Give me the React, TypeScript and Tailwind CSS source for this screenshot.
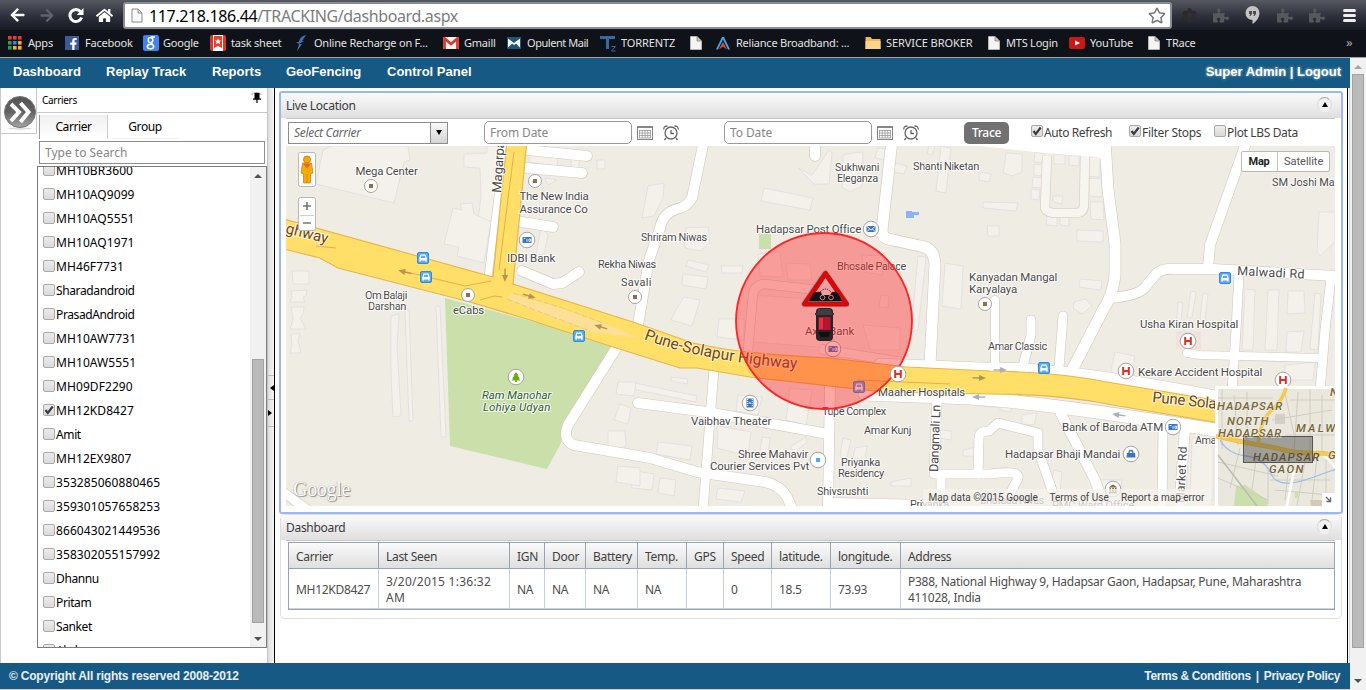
import React from "react";
import { FaArrowLeft, FaArrowRight, FaHome, FaPuzzlePiece, FaCog, FaRegStar, FaFacebookF } from "react-icons/fa";

const ui = "font-['Noto_Sans',sans-serif]";
const arial = "font-['Liberation_Sans',sans-serif]";

/* ---------- browser chrome ---------- */

function Page({ className = "h-[14px] w-[12px]" }: { className?: string }) {
  return (
    <svg viewBox="0 0 12 14" className={className}>
      <path d="M.5.5H7L11.5 5v8.500H.5Z" fill="#f4f4f4" stroke="#d8d8d8" strokeWidth=".6" />
      <path d="M7 .5V5h4.500" fill="#c9c9c9" stroke="#777" strokeWidth=".7" />
    </svg>
  );
}

function AppsIcon() {
  const c = ["#e33b2e", "#e33b2e", "#e33b2e", "#2f9e55", "#3f7fe8", "#f0b41c", "#2f9e55", "#f0b41c", "#f0b41c"];
  return (
    <svg viewBox="0 0 14 14" className="h-[14px] w-[14px]">
      {c.map((f, i) => <rect key={i} x={(i % 3) * 5} y={Math.floor(i / 3) * 5} width="3.600" height="3.600" fill={f} />)}
    </svg>
  );
}

function Mark({ w, iconW, icon, children }: { w: string; iconW: string; icon: React.ReactNode; children?: React.ReactNode }) {
  return (
    <div className={`flex shrink-0 items-center ${w}`}>
      <div className={`flex shrink-0 items-center ${iconW}`}>{icon}</div>
      <span className="whitespace-nowrap">{children}</span>
    </div>
  );
}

function Chrome() {
  return (
    <header className="h-[58px] border-b border-[#a9a3a8] bg-[#10121a]">
      <div className="flex h-[30px] items-center bg-gradient-to-b from-[#565962] via-[#30333d] to-[#181a24] text-white">
        <div className="flex w-[123px] items-center pl-[9px]">
          <FaArrowLeft className="h-[16px] w-[17px]" />
          <FaArrowRight className="ml-[13px] h-[15px] w-[16px] text-[#5f626a]" />
          <svg viewBox="0 0 16 16" className="ml-[13px] h-[17px] w-[16px]">
            <path d="M12.600 4.200A6 6 0 1 0 13.600 10" fill="none" stroke="#fff" strokeWidth="3" />
            <path d="M15.500.5v7H8.700Z" fill="#fff" />
          </svg>
          <FaHome className="ml-[12px] h-[17px] w-[17px]" />
        </div>
        <div className="mt-px flex h-[27px] w-[1049px] items-center rounded-[3px] border-2 border-[#8b8d94] bg-white pl-[6px] pr-[4px]">
          <svg viewBox="0 0 12 15" className="h-[15px] w-[12px]">
            <path d="M1 1h6l4 4v9H1Z" fill="#fafafa" stroke="#888" />
            <path d="M7 1v4h4" fill="none" stroke="#888" />
          </svg>
          <span className={`${ui} ml-[6px] text-[16px] leading-none tracking-[-0.38px] text-[#7c7c7c]`}><span className="text-black">117.218.186.44</span>/TRACKING/dashboard.aspx</span>
          <FaRegStar className="ml-auto h-[17px] w-[18px] text-[#777]" />
        </div>
        <div className="flex flex-1 items-center pl-[10px]">
          <FaCog className="h-[15px] w-[15px] text-[#2b2a2c]" />
          <FaPuzzlePiece className="ml-[16px] h-[15px] w-[16px] text-[#57585c]" />
          <svg viewBox="0 0 14 18" className="ml-[16px] h-[18px] w-[15px]">
            <path d="M7 0a7 7 0 0 1 7 7c0 5-4 9-7 11v-4A7 7 0 0 1 7 0Z" fill="#c4c4c6" />
            <path d="M3.500 5h3v3L5 10H4l.7-2H3.500Zm4 0h3v3L9 10H8l.7-2H7.500Z" fill="#4a4c54" />
          </svg>
          <FaPuzzlePiece className="ml-[17px] h-[15px] w-[16px] text-[#57585c]" />
          <FaPuzzlePiece className="ml-[16px] h-[15px] w-[16px] text-[#57585c]" />
          <div className="ml-[18px] flex flex-col gap-[2px]">
            <i className="h-[3px] w-[13px] rounded-sm bg-[#eee]" />
            <i className="h-[3px] w-[13px] rounded-sm bg-[#eee]" />
            <i className="h-[3px] w-[13px] rounded-sm bg-[#eee]" />
          </div>
        </div>
      </div>
      <div className={`${ui} flex h-[26px] items-center pl-[8px] text-[11px] tracking-[-0.22px] text-[#e2e2e2]`}>
        <Mark w="w-[57px]" iconW="w-[20px]" icon={<AppsIcon />}>Apps</Mark>
        <Mark w="w-[78px]" iconW="w-[20px]" icon={<span className="flex h-[14px] w-[14px] items-end justify-end bg-[#3f5a9b] pr-px"><FaFacebookF className="h-[12px] w-[9px] text-white" /></span>}>Facebook</Mark>
        <Mark w="w-[67px]" iconW="w-[20px]" icon={<svg viewBox="0 0 16 16" className="h-[16px] w-[16px]"><rect width="16" height="16" rx="2" fill="#4083f0" /><ellipse cx="7.500" cy="5" rx="2.300" ry="2.600" fill="none" stroke="#fff" strokeWidth="1.500" /><ellipse cx="7.500" cy="11.500" rx="3.200" ry="2.300" fill="none" stroke="#fff" strokeWidth="1.500" /><path d="M8 2h4M8 7.500l1.500 1.500" stroke="#fff" strokeWidth="1.300" /></svg>}>Google</Mark>
        <Mark w="w-[85px]" iconW="w-[21px]" icon={<svg viewBox="0 0 16 16" className="h-[16px] w-[16px]"><rect width="16" height="16" rx="2" fill="#d93a27" /><rect x="3" width="10" height="16" fill="#fff" /><path d="M4 1h8v12l-4-2-4 2Z" fill="#e1402b" /><path d="m8 3.500 1 2h2L9.500 7l.5 2.300-2-1.200-2 1.200L6.500 7 5 5.500h2Z" fill="#fff" /></svg>}>task sheet</Mark>
        <Mark w="w-[148px]" iconW="w-[19px]" icon={<svg viewBox="0 0 12 16" className="h-[16px] w-[12px]"><path d="M11 0C7 1 4 4 4 7H1l3 2-2 7 5-7H4l5-3H7Z" fill="#3b74bd" /></svg>}>Online Recharge on F...</Mark>
        <Mark w="w-[64px]" iconW="w-[21px]" icon={<svg viewBox="0 0 16 12" className="h-[12px] w-[16px]"><rect width="16" height="12" fill="#f2f2f2" /><path d="M1.500 12V1.500L8 7l6.500-5.500V12" fill="none" stroke="#d83a2e" strokeWidth="2.800" /></svg>}>Gmaill</Mark>
        <Mark w="w-[93px]" iconW="w-[20px]" icon={<svg viewBox="0 0 14 12" className="h-[12px] w-[14px]"><rect width="14" height="12" fill="#1f5877" /><path d="M1 1.500 7 6l6-4.500v9L9 6.500 7 8 5 6.500l-4 4Z" fill="#fff" /></svg>}><span className="tracking-[-0.45px]">Opulent Mail</span></Mark>
        <Mark w="w-[90px]" iconW="w-[21px]" icon={<svg viewBox="0 0 17 17" className="h-[17px] w-[17px]"><path d="M0 1h15v3H9v10H6V4H0Z" fill="#376a9f" /><path d="M11.500 11.500h4l-4 4.500h4" fill="none" stroke="#376a9f" /></svg>}><span className="tracking-[-0.1px]">TORRENTZ</span></Mark>
        <Mark w="w-[25px]" iconW="w-[12px]" icon={<Page />} />
        <Mark w="w-[150px]" iconW="w-[21px]" icon={<svg viewBox="0 0 16 14" className="h-[14px] w-[16px]"><path d="M1 13.500 7 1h2l6 12.500h-2L8 3.500l-5 10Z" fill="#41a4e4" /><path d="M4 13.500 8 6l4 7.500L8 10.500Z" fill="#ec4a36" /></svg>}>Reliance Broadband: ...</Mark>
        <Mark w="w-[123px]" iconW="w-[21px]" icon={<svg viewBox="0 0 16 14" className="h-[14px] w-[16px]"><path d="M.5 1h5L7 3h8.500v10H.5Z" fill="#eeb85f" /><path d="M.5 5h15v8H.5Z" fill="#f9d48a" /></svg>}><span className="tracking-[-0.08px]">SERVICE BROKER</span></Mark>
        <Mark w="w-[81px]" iconW="w-[18px]" icon={<Page />}>MTS Login</Mark>
        <Mark w="w-[79px]" iconW="w-[21px]" icon={<svg viewBox="0 0 16 12" className="h-[12px] w-[16px]"><rect width="16" height="12" rx="2" fill="#ca1717" /><path d="m6 3.500 5 2.500-5 2.500Z" fill="#fff" /></svg>}>YouTube</Mark>
        <Mark w="w-[198px]" iconW="w-[18px]" icon={<Page />}>TRace</Mark>
        <span className="text-[13px] text-[#aaa]">»</span>
      </div>
    </header>
  );
}

/* ---------- shared controls ---------- */

function Check({ on = false }: { on?: boolean }) {
  return (
    <span className="flex h-[12px] w-[12px] shrink-0 items-center justify-center rounded-[2px] border border-[#a9a9a9] bg-gradient-to-b from-[#ececec] to-[#dadada]">
      {on && <svg viewBox="0 0 10 10" className="h-[10px] w-[10px]"><path d="m1.500 5 2.300 3L8.700 1.500" fill="none" stroke="#3c3c3c" strokeWidth="2.200" /></svg>}
    </span>
  );
}

function Tri({ dir, color = "#505050" }: { dir: "up" | "down"; color?: string }) {
  return (
    <svg viewBox="0 0 8 4" className="h-[4px] w-[8px]">
      <path d={dir === "up" ? "M0 4 4 0l4 4Z" : "M0 0h8L4 4Z"} fill={color} />
    </svg>
  );
}

function PanelHead({ title }: { title: string }) {
  return (
    <div className="flex h-[25px] items-center justify-between rounded-t-[4px] bg-gradient-to-b from-[#fafafa] to-[#dfdfdf] pl-[5px] pr-[9px] text-[12px] text-[#3a3a3a]">
      <span>{title}</span>
      <span className="-mt-[3px] flex h-[15px] w-[15px] items-center justify-center rounded-full border border-x-[#dcdcdc] border-b-transparent border-t-[#aaa] bg-[#f1f1f1]">
        <svg viewBox="0 0 6 5" className="h-[5px] w-[6px]"><path d="M0 5 3 0l3 5Z" /></svg>
      </span>
    </div>
  );
}

/* ---------- sidebar ---------- */

const carriers = [
  "MH10BR3600", "MH10AQ9099", "MH10AQ5551", "MH10AQ1971", "MH46F7731", "Sharadandroid", "PrasadAndroid",
  "MH10AW7731", "MH10AW5551", "MH09DF2290", "MH12KD8427", "Amit", "MH12EX9807", "353285060880465",
  "359301057658253", "866043021449536", "358302055157992", "Dhannu", "Pritam", "Sanket", "Akshay",
];

function Sidebar() {
  return (
    <aside className={`${ui} flex w-[275px] shrink-0 text-black`}>
      <div className="w-[37px] border-l border-[#c8c8c8]">
        <div className="flex h-[46px] items-center justify-center border-b border-r border-[#c8c8c8]">
          <svg viewBox="0 0 34 34" className="ml-[2px] mt-[5px] h-[34px] w-[34px] shrink-0">
            <defs><linearGradient id="g" x2="0" y2="1"><stop stopColor="#555" /><stop offset=".5" stopColor="#626262" /><stop offset="1" stopColor="#a5a5a5" /></linearGradient></defs>
            <ellipse cx="17" cy="32.500" rx="12" ry="1.200" fill="#ddd" />
            <circle cx="17" cy="16" r="15.500" fill="url(#g)" stroke="#777" />
            <path d="m8 8 8 8-8 9M17.500 7l8 9-8 10" fill="none" stroke="#fff" strokeWidth="4" />
          </svg>
        </div>
      </div>
      <div className="w-[230px]">
        <div className="flex h-[25px] items-start justify-between border-b border-[#c8c8c8] pl-[5px] pr-[3px]">
          <span className="mt-[5px] text-[10px] leading-[14px] tracking-[-0.3px]">Carriers</span>
          <span className="mt-[4px] flex h-[15px] w-[15px] items-start justify-center rounded-full border border-x-transparent border-b-transparent border-t-[#aaa]">
            <svg viewBox="0 0 8 10" className="h-[10px] w-[8px]"><path d="M1.500 0h5v5.500H8v1.200H4.600V10H3.400V6.700H0V5.500h1.500Z" /></svg>
          </span>
        </div>
        <div className="flex h-[28px] gap-[4px] pl-[2px] text-[12px] tracking-[-0.4px]">
          <div className="mt-[2px] flex h-[24px] w-[69px] items-center justify-center border-l border-r border-l-[#999] border-r-[#ccc] bg-gradient-to-b from-[#f0f0f0] to-white">Carrier</div>
          <div className="flex h-[26px] w-[66px] items-center justify-center border-b border-[#eee] pt-[2px]">Group</div>
        </div>
        <div className="ml-[2px] flex h-[23px] w-[226px] items-center border border-[#8d8d8d] pl-[5px] text-[12px] text-[#858585]">Type to Search</div>
        <div className="mt-[2px] flex h-[482px] overflow-hidden border border-[#7c7c7c]">
          <div className="h-[480px] flex-1 overflow-hidden">
            <div className="-mt-[8px]">
              {carriers.map((c) => (
                <div key={c} className="flex h-[24px] items-center pl-[5px] text-[12px]">
                  <span className="-mt-[3px]"><Check on={c === "MH12KD8427"} /></span>
                  <span className={`ml-px ${/[a-z]/.test(c) ? "tracking-[-0.38px]" : "tracking-[0.08px]"}`}>{c}</span>
                </div>
              ))}
            </div>
          </div>
          <div className="flex w-[16px] flex-col items-center bg-[#f1f1f1]">
            <div className="flex h-[192px] pt-[7px]"><Tri dir="up" /></div>
            <div className="h-[264px] w-[12px] border border-[#a2a2a2] bg-[#bababa]" />
            <div className="flex flex-1 items-center pt-[7px]"><Tri dir="down" /></div>
          </div>
        </div>
      </div>
      <div className="flex w-[8px] flex-col border-l border-r border-l-[#c4c4c4] border-r-black bg-gradient-to-r from-[#ddd] to-[#f6f6f6]">
        <div className="mt-[287px] flex h-[25px] items-center justify-end border-b border-t border-[#bbb]"><svg viewBox="0 0 4 6" className="h-[6px] w-[4px]"><path d="M4 0v6L0 3Z" /></svg></div>
        <div className="flex h-[27px] items-center border-b border-[#bbb]"><svg viewBox="0 0 4 6" className="h-[6px] w-[4px]"><path d="M0 0v6l4-3Z" /></svg></div>
      </div>
    </aside>
  );
}

/* ---------- map ---------- */

const roads: [string, number][] = [
  ["M704 140 692 198Q688 205 680 208 663 212 660 228L649 260 638 325", 10],
  ["M815 140V156", 10],
  ["M892 140 882 230Q882 239 893 240L920 246Q935 248 935 265L930 365", 11],
  ["M1105 140 1108 190 1115 243 1115 275Q1113 295 1103 310L1071 372", 11],
  ["M1247 140 1210 245 1208 268", 10],
  ["M1109 298Q1140 296 1146 286L1155 275Q1161 268 1175 269L1213 269 1335 276", 10],
  ["M1239 274 1236 330 1232 392", 9],
  ["M1331 278 1325 330 1320 392", 9],
  ["M1187 353 1200 355 1318 358", 8],
  ["M995 300V366", 8],
  ["M1031 320 1031 335 1023 366", 9],
  ["M1063 316 1059 368", 9],
  ["M830 384 828 510", 10],
  ["M638 403 707 412 828 434", 10],
  ["M714 368 703 510", 9],
  ["M617 347 568 425Q562 440 574 445L650 458 697 472 765 482Q780 485 787 497L792 508", 10],
  ["M937 398 934 474 990 474Q1020 470 1018 478L1010 494", 9],
  ["M978 474 979 438Q979 431 989 431L998 423 1038 433 1038 450 1052 490", 9],
  ["M1060 412 1095 480 1106 510", 10],
  ["M1163 428 1162 510", 9],
  ["M1185 428 1179 510", 10],
  ["M522 271 553 284 562 283 579 272", 10],
  ["M527 150 587 156", 10],
  ["M527 168 582 173", 10],
  ["M522 222 553 227", 10],
  ["M833 502 930 504", 8],
  ["M941 478V510", 9],
  ["M880 364 980 368Q1060 366 1215 396", 11],
  ["M865 394 970 398Q1050 403 1215 430", 13],
  ["M505 140 488 277", 7],
  ["M280 490 312 513", 9],
];

const lightRoads = [
  "M1047 156 1045 208Q1046 212 1054 213L1076 213Q1083 213 1084 206L1085 156",
  "M748 350 753 295Q755 284 765 284L826 291",
  "M820 349 902 362",
];

const buildings = [
  "M332 146 408 146 410 160 404 162 394 203 316 184 323 150Z",
  "M464 154 487 153 487 146 500 146 493 221 478 221 481 196 480 168 464 167Z",
  "M453 208 462 210 460 204 472 203 474 214 491 222 484 263 457 256 459 247 444 244Z",
  "M292 271 309 271 309 284 293 284Z", "M291 291 307 290 306 296 303 297 305 302 290 302 292 297Z",
  "M291 307 304 307 303 314 300 318 306 329 290 329 293 320Z", "M291 334 300 334 298 341 301 353 290 353 292 345Z",
  "M391 316 399 314 397 345 401 416 393 417 391 372Z", "M405 310 409 310 413 421 409 421Z", "M436 306 440 306 446 437 441 437Z",
  "M530 152 558 154 557 166 529 162Z", "M571 157 580 158 578 169 571 168Z", "M597 160 605 160 605 169 597 169Z",
  "M545 178 557 180 548 185Z", "M541 228 548 235 544 254 536 255Z", "M648 186 664 183 663 198 654 216 642 218Z",
  "M764 188 813 198 810 210 761 201Z", "M798 168 812 175 829 150 832 153 829 184 814 184Z",
  "M852 153 863 152 862 186 850 192 842 187 843 155Z", "M878 148 888 149 885 160 875 158Z", "M895 163 907 166 904 174 893 172Z",
  "M941 146 951 148 946 193 936 191Z", "M929 146 935 146 932 155 927 154Z", "M980 172 991 174 989 182 979 180Z",
  "M1006 153 1022 154 1022 172 1012 176 1003 173Z", "M983 202 1018 203 1016 211 983 208Z", "M987 226 999 226 999 236 988 236Z",
  "M1035 152 1044 154 1044 163 1034 162Z", "M1034 164 1044 165 1043 176 1034 175Z", "M1033 177 1042 178 1041 188 1032 187Z", "M1031 189 1040 190 1039 200 1031 199Z",
  "M1054 154 1065 155 1065 164 1054 164Z", "M1069 155 1079 156 1079 166 1069 165Z", "M1087 157 1100 157 1100 177 1087 176Z",
  "M1089 178 1102 179 1102 197 1089 196Z", "M1090 202 1103 202 1104 220 1091 219Z", "M1053 196 1063 196 1062 204 1053 202Z",
  "M1047 214 1057 214 1057 226 1046 225Z", "M1060 214 1069 214 1069 226 1060 225Z", "M1077 230 1103 231 1103 242 1077 241Z",
  "M1080 279 1102 281 1101 290 1079 287Z", "M1074 302 1086 299 1092 306 1082 314 1073 308Z",
  "M1319 212 1335 212 1335 242 1320 256 1317 252Z", "M1178 302 1183 303 1180 328 1176 327Z", "M1191 291 1196 292 1192 318 1187 317Z",
  "M1203 293 1208 294 1205 320 1200 319Z", "M1245 289 1255 290 1253 350 1242 350Z", "M1268 290 1279 290 1277 350 1265 350Z",
  "M1288 291 1304 291 1305 313 1287 314Z", "M1315 293 1321 294 1318 350 1310 349Z", "M1287 332 1304 331 1301 352 1286 352Z",
  "M1285 365 1315 362 1313 380 1285 380Z", "M1115 352 1135 356 1131 380 1110 375Z",
  "M686 228 708 227 710 243 700 251 685 248Z", "M688 260 709 265 706 272 686 266Z", "M721 266 743 266 742 273 722 273Z",
  "M683 274 708 277 706 289 682 285Z", "M684 297 700 300 692 326 671 320 676 310Z", "M719 319 744 319 744 340 717 337Z",
  "M758 254 780 252 783 277 760 276Z", "M786 263 810 264 812 280 788 280Z", "M754 295 835 301 830 348 753 342Z",
  "M862 255 885 256 882 275 864 272Z", "M918 256 926 257 918 330 911 332Z", "M945 263 963 266 961 309 942 306Z",
  "M881 295 889 296 888 308 879 307Z", "M863 325 900 328 900 350 870 350Z",
  "M630 382 697 396 696 402 628 388Z", "M671 377 688 379 687 384 671 381Z", "M738 395 762 397 758 415 736 411Z",
  "M790 388 812 390 806 425 786 420Z", "M718 426 751 432 748 456 717 448Z", "M658 442 692 446 690 460 656 454Z",
  "M630 470 654 474 652 490 632 488Z", "M660 478 676 480 674 496 658 493Z", "M718 488 745 491 741 502 716 499Z",
  "M762 437 770 438 768 454 760 452Z", "M790 447 806 437 807 442 795 452Z", "M843 438 851 440 846 460 840 456Z",
  "M855 448 867 446 865 460 853 458Z", "M891 482 911 478 911 486 891 486Z", "M963 450 976 447 976 456 963 456Z",
  "M940 430 951 431 951 440 940 438Z", "M978 394 1013 398 1010 408 980 406Z", "M618 382 636 382 634 396 616 394Z",
  "M608 431 625 431 626 447 608 448Z", "M618 466 640 468 640 486 616 482Z", "M620 404 631 408 628 424 614 420Z",
  "M1000 402 1013 402 1011 412 1000 410Z", "M1022 415 1037 413 1034 425 1022 424Z", "M1054 470 1062 472 1060 492 1050 488Z",
  "M1192 438 1213 438 1213 500 1190 500Z", "M1100 480 1122 480 1120 500 1100 500Z",
];

function Lbl({ x, y, w, s = 11.5, r, fill = "#4a4a4a", it, children }: { x: number; y: number; w: number; s?: number; r?: number; fill?: string; it?: boolean; children: string }) {
  return (
    <text x={x} y={y} textLength={w} fontSize={s} fill={fill} fontStyle={it ? "italic" : undefined} stroke="#fff" strokeOpacity=".75" strokeWidth="2.200" paintOrder="stroke" strokeLinejoin="round" transform={r ? `rotate(${r} ${x} ${y})` : undefined}>{children}</text>
  );
}

function Poi({ x, y, kind }: { x: number; y: number; kind: string }) {
  const r = kind === "dot" ? 6.500 : 7.800;
  return (
    <g transform={`translate(${x} ${y})`}>
      <circle r={r} fill="#fff" stroke="#a5a5a5" />
      {kind === "dot" && <rect x="-2" y="-2" width="4" height="4" fill="#966b48" />}
      {kind === "blue" && <rect x="-2" y="-2" width="4" height="4" fill="#4fa7f5" />}
      {kind === "h" && <path d="M-2.800-4V4M2.800-4V4M-2.800 0h5.600" stroke="#d8322a" strokeWidth="2" fill="none" />}
      {kind === "bank" && <><rect x="-4.500" y="-3" width="9" height="6" fill="#3b73c8" /><path d="M-3.500-1.500h2M0-1V2M2-1h1.500V1.500H2Z" stroke="#fff" strokeWidth=".8" fill="none" /></>}
      {kind === "mail" && <><rect x="-4.500" y="-3" width="9" height="6" fill="#3b73c8" /><path d="m-4.500-3 4.500 4 4.500-4M-4.500 3l3-3M4.500 3l-3-3" stroke="#fff" strokeWidth=".9" fill="none" /></>}
      {kind === "film" && <><rect x="-3.500" y="-4.500" width="7" height="9" fill="#3b73c8" /><path d="M-2.300-4v8M2.300-4v8" stroke="#fff" strokeDasharray="1 1" /><path d="M-1.300 0h2.600" stroke="#fff" /></>}
      {kind === "bag" && <><path d="M-4-1h8L4.500 3.500h-9Z" fill="#3b73c8" /><path d="M-2-1a2 2.500 0 0 1 4 0" fill="none" stroke="#3b73c8" strokeWidth="1.300" /></>}
      {kind === "tree" && <path d="m0-5 2.500 3.500H1.500L4 1.500H2.700L4.200 3.500H.8V5H-.8V3.500h-3.400L-2.700 1.500H-4l2.500-3h-1Z" fill="#6bac0b" />}
      {kind === "gov" && <path d="M-4.500-1.500 0-4.500 4.500-1.500ZM-4 3h8v1.500h-8ZM-3.500-1h1.500v4h-1.500ZM-.8-1H.8v4H-.8ZM2-1h1.500v4H2Z" fill="#8d6345" />}
    </g>
  );
}

function Bus({ x, y }: { x: number; y: number }) {
  return (
    <g transform={`translate(${x} ${y})`}>
      <rect x="-5.500" y="-5.500" width="11" height="11" rx="1.500" fill="#58aaf3" stroke="#2f8be0" />
      <path d="M-2.500-3.500h5L3.700 0V3.500H2V2.500h-4v1h-1.700V0Z" fill="#fff" />
      <path d="M-1.800-2.300h3.600L2.300 0h-4.600Z" fill="#58aaf3" />
    </g>
  );
}

function Arrow({ x, y, r, c = "#b5954a" }: { x: number; y: number; r: number; c?: string }) {
  return <path transform={`translate(${x} ${y}) rotate(${r})`} d="M-6.500-.7H0V-3L7 0 0 3V.7h-6.500Z" fill={c} />;
}

function MapDrawing() {
  return (
    <svg viewBox="286 146 1049 360" className="block h-[360px] w-[1049px] font-[Roboto,sans-serif]">
      <rect x="286" y="146" width="1049" height="360" fill="#efece4" />
      <path d="M445 298 620 345 566 428 560 445 547 469 450 446Z" fill="#cbdfab" />
      <path d="M759 234h12v15h-12Z" fill="#cbdfab" />
      <path d="M906 211h6v1h7v3h-5v3h-8Z" fill="#8ab4f8" />
      <g fill="#f4f1ea" stroke="#dcdae0" strokeWidth=".7">{buildings.map((d) => <path key={d} d={d} />)}</g>
      <path d="M1176 331h25v18h-25Z" fill="#f0e2dc" />
      <g fill="none" stroke="#d8d0c4" strokeWidth="10">{lightRoads.map((d) => <path key={d} d={d} />)}</g>
      <g fill="none" stroke="#f7f5ef" strokeWidth="8.600">{lightRoads.map((d) => <path key={d} d={d} />)}</g>
      <g fill="none" stroke="#d3cabd" strokeLinecap="round" strokeLinejoin="round">{roads.map(([d, w]) => <path key={d} d={d} strokeWidth={w + 1.200} />)}</g>
      <path d="M980 146H1110V164L1097 157 1045 153Z" fill="#fff" />
      <g fill="none" stroke="#fff" strokeLinecap="round" strokeLinejoin="round">{roads.map(([d, w]) => <path key={d} d={d} strokeWidth={w} />)}</g>

      <path d="M280 218 493 277 507 140H527L513 284 633 322 693 343Q740 354 830 358L907 367 990 371Q1060 372 1113 383L1220 401V423L1113 405Q1060 394 990 394L883 392 750 377 697 368 680 368 613 347 530 320 470 302 338 268 320 258 280 248Z" fill="#ffdf68" stroke="#e8b64a" strokeWidth="1.200" />
      <path d="M407 272 465 286 491 281M480 300 494 296 502 297M514 152 499 270M857 380 950 384M316 246 336 248" fill="none" stroke="#e3b04b" strokeWidth="1" />
      <path d="M507 298 512 294 560 308 605 324 640 338 610 334 590 332 540 313Z" fill="#fddf96" />
      <path d="M513 293 560 307 603 323M507 299 540 312 590 331" fill="none" stroke="#d5bf9c" strokeWidth=".7" strokeDasharray="6 2" />
      <Arrow x={405} y={272} r={195} /><Arrow x={505} y={275} r={90} /><Arrow x={529} y={296} r={17} /><Arrow x={601} y={327} r={197} />
      <Arrow x={979} y={378} r={1} /><Arrow x={1000} y={370} r={1} c="#a9b0bb" /><Arrow x={979} y={397} r={181} c="#a9b0bb" /><Arrow x={1119} y={415} r={188} c="#a9b0bb" />

      <Poi x={371} y={186} kind="dot" /><Poi x={535} y={181} kind="dot" /><Poi x={527} y={240} kind="bank" /><Poi x={468} y={295} kind="dot" />
      <Poi x={635} y={297} kind="dot" /><Poi x={871} y={229} kind="mail" /><Poi x={985} y={304} kind="dot" /><Poi x={516} y={377} kind="tree" />
      <Poi x={833} y={349} kind="bank" /><Poi x={750} y={403} kind="film" /><Poi x={818} y={460} kind="blue" />
      <Poi x={1188} y={341} kind="h" /><Poi x={1126} y={371} kind="h" /><Poi x={1283} y={380} kind="h" /><Poi x={1173} y={427} kind="bank" />
      <Poi x={1131} y={454} kind="bag" /><Poi x={1113} y={489} kind="gov" />
      <Bus x={423} y={258} /><Bus x={426} y={277} /><Bus x={579} y={336} /><Bus x={859} y={387} /><Bus x={1044} y={368} /><Bus x={1225} y={278} />

      <Lbl x={355.500} y={175} w={62}>Mega Center</Lbl>
      <Lbl x={501} y={193} w={67} s={13} r={-86}>Magarpatta</Lbl>
      <Lbl x={519.500} y={200} w={69}>The New India</Lbl>
      <Lbl x={519.500} y={213} w={68}>Assurance Co</Lbl>
      <Lbl x={507} y={262} w={48}>IDBI Bank</Lbl>
      <Lbl x={453} y={314} w={31}>eCabs</Lbl>
      <Lbl x={365} y={299} w={42} s={11}>Om Balaji</Lbl>
      <Lbl x={368} y={310} w={38} s={11}>Darshan</Lbl>
      <Lbl x={285} y={233} w={43} s={15} r={14} fill="#6e4415">ghway</Lbl>
      <Lbl x={598} y={268} w={58} s={11}>Rekha Niwas</Lbl>
      <Lbl x={621} y={286} w={30} s={11}>Savali</Lbl>
      <Lbl x={641} y={241} w={66} s={11}>Shriram Niwas</Lbl>
      <Lbl x={835} y={171} w={44} s={11}>Sukhwani</Lbl>
      <Lbl x={837} y={182} w={41} s={11}>Eleganza</Lbl>
      <Lbl x={913} y={170} w={66} s={11}>Shanti Niketan</Lbl>
      <Lbl x={756} y={233} w={105}>Hadapsar Post Office</Lbl>
      <Lbl x={837} y={270} w={69} s={11}>Bhosale Palace</Lbl>
      <Lbl x={805} y={335} w={49}>Axis Bank</Lbl>
      <Lbl x={969} y={281} w={88}>Kanyadan Mangal</Lbl>
      <Lbl x={969} y={293} w={48}>Karyalaya</Lbl>
      <Lbl x={988} y={350} w={59} s={11}>Amar Classic</Lbl>
      <Lbl x={1272} y={186} w={72} s={11}>SM Joshi Marg</Lbl>
      <Lbl x={1237} y={275} w={67} s={12.500} r={3}>Malwadi Rd</Lbl>
      <Lbl x={1140} y={328} w={98}>Usha Kiran Hospital</Lbl>
      <Lbl x={1138} y={376} w={124}>Kekare Accident Hospital</Lbl>
      <Lbl x={482} y={399} w={69} it fill="#2f5d35">Ram Manohar</Lbl>
      <Lbl x={483} y={411} w={67} it fill="#2f5d35">Lohiya Udyan</Lbl>
      <text fontSize="15.500" fill="#6e4415" stroke="#fff3c0" strokeWidth="2" paintOrder="stroke"><textPath href="#hw" textLength="156">Pune-Solapur Highway</textPath></text>
      <path id="hw" d="M644 339Q700 361 802 369" fill="none" />
      <Lbl x={1152} y={402} w={85} s={15} r={6} fill="#6e4415">Pune Solapur</Lbl>
      <Lbl x={691} y={425} w={80}>Vaibhav Theater</Lbl>
      <Lbl x={738} y={458} w={70}>Shree Mahavir</Lbl>
      <Lbl x={710} y={470} w={99}>Courier Services Pvt</Lbl>
      <Lbl x={822} y={415} w={64} s={11}>Tupe Complex</Lbl>
      <Lbl x={864} y={434} w={47} s={11}>Amar Kunj</Lbl>
      <Lbl x={841} y={466} w={39} s={11}>Priyanka</Lbl>
      <Lbl x={838} y={477} w={46} s={11}>Residency</Lbl>
      <Lbl x={817} y={495} w={51} s={11}>Shivsrushti</Lbl>
      <Lbl x={910} y={508} w={39} s={11}>Priyanka</Lbl>
      <Lbl x={878} y={396} w={87}>Maaher Hospitals</Lbl>
      <Lbl x={938} y={472} w={67} s={12.500} r={-88}>Dangmali Ln</Lbl>
      <Lbl x={1062} y={431} w={101}>Bank of Baroda ATM</Lbl>
      <Lbl x={1005} y={458} w={115}>Hadapsar Bhaji Mandai</Lbl>
      <Lbl x={1184} y={503} w={56} s={12} r={-87}>Market Rd</Lbl>
      <Lbl x={1195} y={444} w={40} s={11}>Amanora</Lbl>
      <Lbl x={980} y={504} w={64} s={11}>Bhutada Nivas</Lbl>
      <Lbl x={1052} y={509} w={82} s={11}>PMC Ward Office</Lbl>

      <circle cx="824" cy="321" r="88" fill="#ff2020" fillOpacity=".4" stroke="#ff2424" strokeWidth="1.800" />
      <Poi x={898} y={374} kind="h" />

      <g>
        <rect x="816" y="308" width="17" height="33" rx="4" fill="#2a2226" />
        <path d="M815 313h19v2h-19Z" fill="#38363a" />
        <path d="M818 309h13l1 6h-15Z" fill="#3f3d40" />
        <rect x="818.500" y="317" width="12" height="13" fill="#b9142d" />
        <path d="M819 318h4v11h-4Z" fill="#dc3146" />
        <path d="M818.500 332h12l-2 5h-8Z" fill="#111" />
      </g>
      <g strokeLinejoin="round">
        <path d="M825.500 273.500 804.500 304H846.500Z" fill="#c9c3c3" stroke="#a9a0a0" strokeWidth="7" />
        <path d="M825.500 273.500 804.500 304H846.500Z" fill="#f0a0a0" stroke="#d90808" strokeWidth="5" />
        <path d="m809 301 4-8q4-2 8-1l1 3h8l2-3q4-1 6 1l4 8Z" fill="#161112" />
        <path d="M808 301.500h34" stroke="#6d6464" strokeWidth="1.200" />
        <circle cx="822.500" cy="297.500" r="2.300" fill="#161112" stroke="#f0a0a0" strokeWidth=".8" /><circle cx="831" cy="297.500" r="2.300" fill="#161112" stroke="#f0a0a0" strokeWidth=".8" />
        <path d="M820 292q6-6 11 0" fill="none" stroke="#161112" strokeDasharray="1 1" />
      </g>

      <text x="293" y="496" fontSize="20" textLength="57" fill="#fff" className="font-['Liberation_Serif',serif] [text-shadow:0_0_1px_#8c8a85,1px_1px_1px_#8c8a85]">Google</text>
      <rect x="923" y="489" width="288" height="17" fill="#f5f3ee" fillOpacity=".75" />
      <g fontSize="10" fill="#444" className="font-[Roboto,sans-serif]">
        <text x="928.500" y="501" textLength="109">Map data ©2015 Google</text>
        <text x="1049.500" y="501" textLength="59">Terms of Use</text>
        <text x="1121" y="501" textLength="83">Report a map error</text>
      </g>

      <g>
        <rect x="298.500" y="152.500" width="17" height="34" rx="2" fill="#fff" stroke="#b8b8b8" />
        <path d="M302.500 163h9l1.500 10-2.500 1v9h-7v-9l-2.500-1Z" fill="#f9ab07" stroke="#c57b00" strokeWidth=".7" />
        <circle cx="307" cy="159.500" r="3.600" fill="#f5a800" stroke="#b36d00" strokeWidth=".7" />
        <path d="M303.500 164h7l-3.500 4.500Z" fill="#ef5a4c" /><path d="M307 174v9" stroke="#c57b00" strokeWidth=".7" />
        <rect x="298.500" y="197.500" width="17" height="33" rx="2" fill="#fff" stroke="#b8b8b8" />
        <path d="M300 215.500h14" stroke="#d0d0d0" /><path d="M303 206h8M307 202v8M303 223h8" stroke="#777" strokeWidth="1.700" />
      </g>

      <svg x="1215" y="386" width="120" height="120" viewBox="1215 386 120 120">
        <rect x="1215" y="386" width="120" height="120" fill="#fff" />
        <rect x="1218" y="389" width="117" height="117" fill="#eae7dc" />
        <path d="M1234 506 1236 486 1245 485 1266 499 1268 506Z" fill="#cbdfab" /><path d="M1295 492h3v6h-3Z" fill="#cbdfab" />
        <path d="M1310 500h10l15 3v3h-24Z" fill="#d5c8b8" />
        <path d="M1275 414h10v10h-10Z" fill="#d4d0c9" />
        <g fill="none" stroke="#cfcac1" strokeWidth=".9">
          <path d="M1222 389v60M1234 395l4 50M1247 392v55M1218 398h55M1218 410 1260 404M1284 389l10 45M1298 392l-4 60M1310 389v70M1322 395v60M1272 420l60-10M1290 400h45M1285 435h50M1218 462l60 14M1240 448l-10 40M1256 460l-4 30M1268 470v34M1290 455l-5 45M1305 462l-8 44M1318 450l-6 50M1218 478l50 22M1270 480h60M1275 490l55 5M1326 460v40" />
        </g>
        <path d="M1218 455 1257 506" stroke="#b9b9b4" strokeWidth="1.400" />
        <path d="M1220 440q8 14 26 16t25 18 40 4 24-8" fill="none" stroke="#9bbcf0" strokeWidth="1.300" />
        <path d="M1318 452q12 6 17 16M1294 470 1287 506" stroke="#fff" strokeWidth="2.500" fill="none" />
        <path d="M1216 436q20 5 38 8t30 6 28 3 25 3" fill="none" stroke="#e8b93c" strokeWidth="4.500" />
        <path d="M1216 436q20 5 38 8t30 6 28 3 25 3M1286 388q-3 12-16 24-10 10-12 33" fill="none" stroke="#f4cb50" strokeWidth="3.500" />
        <rect x="1243.500" y="436.500" width="69" height="26" fill="#333" fillOpacity=".4" stroke="#555" />
        <g fontStyle="italic" fontSize="11.500" fontWeight="500" fill="#75663c" stroke="#f5f2e8" strokeOpacity=".6" strokeWidth="1.500" paintOrder="stroke">
          <text x="1217" y="410" textLength="65">HADAPSAR</text><text x="1227" y="425" textLength="41">NORTH</text>
          <text x="1218" y="437" textLength="63">HADAPSAR</text><text x="1296" y="432" textLength="48">MALWA</text>
          <text x="1253" y="461" textLength="66" strokeOpacity="0" fill="#5c5233">HADAPSAR</text><text x="1269" y="473" textLength="34">GAON</text><text x="1328" y="459">G</text><text x="1330" y="396">N</text>
        </g>
        <rect x="1322" y="493" width="13" height="13" fill="#fff" />
        <path d="m1326 497 4.500 4.500m0-4v4h-4" fill="none" stroke="#666" strokeWidth="1.300" />
      </svg>

      <rect x="1241.500" y="151.500" width="88" height="20" rx="1.500" fill="#fff" stroke="#b8b8b8" />
      <path d="M1277.500 152v19" stroke="#c4c4c4" />
      <text x="1248.500" y="165" fontSize="11" fontWeight="700" fill="#222" textLength="21">Map</text>
      <text x="1284" y="165" fontSize="11" fill="#555" textLength="39">Satellite</text>
    </svg>
  );
}

/* ---------- content ---------- */

function DateIcons() {
  return (
    <>
      <svg viewBox="0 0 16 14" className="ml-[5px] h-[14px] w-[16px]">
        <rect x=".5" y=".5" width="15" height="13" fill="#fff" stroke="#888" /><path d="M0 1.500h16" stroke="#888" />
        <path d="M2 4.500h12M2 7h12M2 9.500h12M2 12h12M2.500 4v8M5.200 4v8M8 4v8M10.800 4v8M13.500 4v8" stroke="#999" strokeWidth=".8" />
      </svg>
      <svg viewBox="0 0 16 16" className="ml-[10px] h-[16px] w-[16px]" fill="none" stroke="#666">
        <circle cx="8" cy="8" r="6" strokeWidth="1.300" /><path d="M8 5v3.500h3M3 13l-1.500 2M13 13l1.500 2M.8 4.500Q.5 1 4.500 1M15.200 4.500Q15.500 1 11.500 1" strokeWidth="1.300" />
      </svg>
    </>
  );
}

const columns = ["Carrier", "Last Seen", "IGN", "Door", "Battery", "Temp.", "GPS", "Speed", "latitude.", "longitude.", "Address"];
const row: [string, string][] = [
  ["MH12KD8427", "tracking-[-0.3px]"], ["3/20/2015 1:36:32 AM", "tracking-[0.25px]"], ["NA", ""], ["NA", ""], ["NA", ""], ["NA", ""], ["", ""],
  ["0", ""], ["18.5", ""], ["73.93", ""],
  ["P388, National Highway 9, Hadapsar Gaon, Hadapsar, Pune, Maharashtra 411028, India", "tracking-[-0.26px]"],
];
const grid = "grid grid-cols-[90px_131px_35px_41px_52px_49px_37px_48px_59px_70px_1fr]";

function Content() {
  return (
    <main className={`${ui} flex-1 border-r border-black px-[4px] pt-[3px] text-[12px] tracking-[-0.3px] text-[#3f3f3f]`}>
      <section className="h-[423px] w-[1064px] rounded-[3px] border-2 border-[#98b8f4]">
        <PanelHead title="Live Location" />
        <div className="ml-[5px] w-[1049px]">
          <div className="flex h-[28px] items-center border-t border-[#c6c6c6]">
            <div className="ml-[2px] flex h-[22px] w-[160px] border border-[#8c8c8c]">
              <span className="flex-1 pl-[5px] italic leading-[20px] text-[#666]">Select Carrier</span>
              <span className="flex w-[17px] items-center justify-center border-l border-[#8c8c8c] bg-gradient-to-b from-[#fafafa] to-[#d4d4d4]"><svg viewBox="0 0 6 5" className="h-[5px] w-[6px]"><path d="M0 0h6L3 5Z" /></svg></span>
            </div>
            <div className="ml-[36px] h-[23px] w-[148px] rounded-[5px] border border-[#999] pl-[5px] leading-[21px] tracking-[-0.1px] text-[#858585]">From Date</div>
            <DateIcons />
            <div className="ml-[45px] h-[23px] w-[148px] rounded-[5px] border border-[#999] pl-[5px] leading-[21px] tracking-[-0.1px] text-[#858585]">To Date</div>
            <DateIcons />
            <div className="ml-[45px] h-[22px] w-[45px] rounded-[5px] bg-[#717171] text-center font-medium leading-[22px] text-white">Trace</div>
            <div className="ml-[22px] flex w-[98px] items-center"><span className="-mt-[4px]"><Check on /></span><span className="ml-px tracking-[-0.4px]">Auto Refresh</span></div>
            <div className="flex w-[85px] items-center"><span className="-mt-[4px]"><Check on /></span><span className="ml-px whitespace-nowrap">Filter Stops</span></div>
            <div className="flex items-center"><span className="-mt-[4px]"><Check /></span><span className="ml-px whitespace-nowrap tracking-[-0.35px]">Plot LBS Data</span></div>
          </div>
          <MapDrawing />
        </div>
      </section>
      <section className="ml-px h-[105px] w-[1062px] rounded-[5px] border border-[#dedede]">
        <PanelHead title="Dashboard" />
        <div className="ml-[5px] w-[1049px] border-t border-[#c6c6c6] pl-[2px] pt-px">
          <div className="border border-[#9aa3b1]">
            <div className={`${grid} h-[26px] border-b border-[#9aa3b1] bg-gradient-to-b from-[#fafafa] to-[#dfdfdf]`}>
              {columns.map((c) => <div key={c} className="flex items-center border-r border-[#9aa3b1] pl-[7px] pt-[2px] last:border-r-0">{c}</div>)}
            </div>
            <div className={`${grid} h-[40px] border-b border-[#c9d4e4] leading-[16px] text-[#4d4d4d]`}>
              {row.map(([c, t], i) => <div key={i} className={`flex items-center border-r border-[#c4d0e2] pl-[7px] pt-[2px] last:border-r-0 last:pr-[20px] ${t}`}>{c}</div>)}
            </div>
          </div>
        </div>
      </section>
    </main>
  );
}

export default function App() {
  return (
    <div className="h-[690px] w-[1366px] overflow-hidden bg-white">
      <Chrome />
      <div className="flex h-[632px]">
        <div className="flex w-[1350px] flex-col border-b border-[#d0d0d0]">
          <nav className={`${arial} flex h-[30px] items-center bg-[#165984] pb-[3px] pl-[13px] pr-[9px] text-[13px] font-bold text-white`}>
            <span className="w-[93px]">Dashboard</span>
            <span className="w-[106px]">Replay Track</span>
            <span className="w-[74px]">Reports</span>
            <span className="w-[101px]">GeoFencing</span>
            <span>Control Panel</span>
            <span className="ml-auto [text-shadow:0_0_3px_#9ec5dc]">Super Admin | Logout</span>
          </nav>
          <div className="flex h-[575px] overflow-hidden">
            <Sidebar />
            <Content />
            <div className="w-[3px] border-r border-[#d4d4d4] bg-white" />
          </div>
          <footer className={`${arial} flex h-[26px] items-center justify-between bg-[#165984] pl-[9px] pr-[10px] text-[12px] font-bold text-[#e8eef2]`}>
            <span className="tracking-[-0.2px]">© Copyright All rights reserved 2008-2012</span>
            <span className="flex gap-[5px] tracking-[-0.37px]"><span>Terms &amp; Conditions</span><span>|</span><span>Privacy Policy</span></span>
          </footer>
        </div>
        <div className="flex w-[16px] flex-col items-center bg-[#f1f1f1]">
          <div className="flex h-[16px] pt-[7px]"><Tri dir="up" color="#a3a3a3" /></div>
          <div className="h-[574px] w-[12px] border border-[#a2a2a2] bg-[#bababa]" />
          <div className="flex flex-1 items-start pt-[31px]"><Tri dir="down" /></div>
        </div>
      </div>
    </div>
  );
}
